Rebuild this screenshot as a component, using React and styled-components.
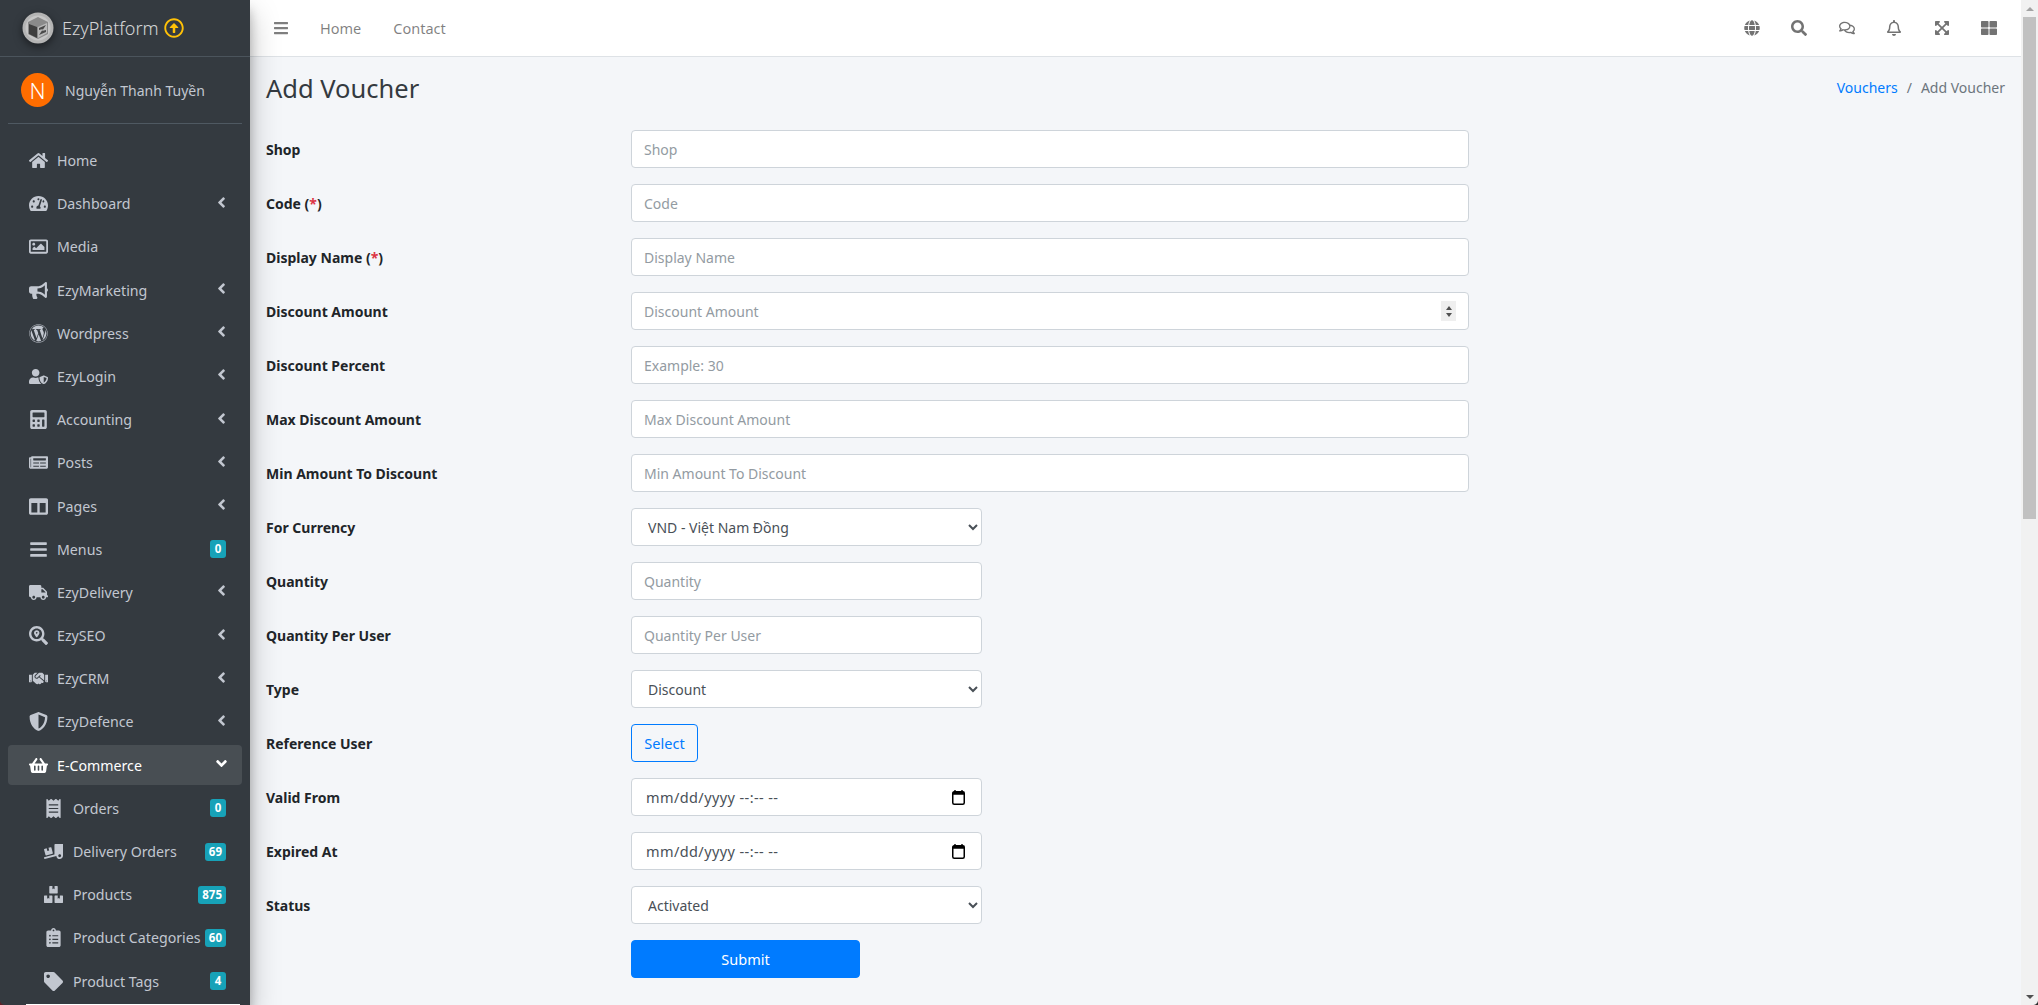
import React from 'react';
import styled, { createGlobalStyle } from 'styled-components';
import {
  FaHome, FaTachometerAlt, FaRegImage, FaBullhorn, FaWordpress, FaUserShield, FaCalculator,
  FaNewspaper, FaColumns, FaBars, FaTruck, FaSearchLocation, FaHandshake, FaShieldAlt,
  FaShoppingBasket, FaReceipt, FaTruckLoading, FaBoxes, FaClipboardList, FaTag, FaGlobe, FaSearch,
  FaRegComments, FaRegBell, FaExpandArrowsAlt, FaThLarge, FaAngleLeft, FaAngleDown, FaRegArrowAltCircleUp,
} from 'react-icons/fa';

const FONT = `"Noto Sans", Roboto, sans-serif`;

const GlobalStyle = createGlobalStyle`
  html, body { margin: 0; height: 100%; overflow: hidden; }
  body { font-family: ${FONT}; font-size: 14.5px; color: #212529; background: #f4f6f9; }
  * { box-sizing: border-box; }
`;

const Page = styled.div`
  display: flex;
  height: 1005px;
  overflow: hidden;
  position: relative;
`;
const Sidebar = styled.aside`
  width: 250px;
  flex: none;
  background: #343a40;
  box-shadow: 0 14px 28px rgba(0,0,0,.25), 0 10px 10px rgba(0,0,0,.22);
  position: relative;
  z-index: 2;
  overflow: hidden;
`;
const Brand = styled.div`
  height: 57px;
  display: flex;
  align-items: center;
  padding-left: 22px;
  border-bottom: 1px solid #4b545c;
  color: rgba(255,255,255,.8);
  font-size: 18px;
  font-weight: 300;
`;
const LogoMark = styled.svg`
  filter: drop-shadow(0 3px 4px rgba(0,0,0,.5));
  flex: none;
`;
const BrandName = styled.span`
  margin-left: 8px;
`;
const Upgrade = styled(FaRegArrowAltCircleUp)`
  color: #ffc107;
  font-size: 20px;
  margin-left: 5px;
`;
const UserPanel = styled.div`
  height: 67px;
  margin: 0 8px;
  display: flex;
  align-items: center;
  padding-left: 13px;
  border-bottom: 1px solid #4f5962;
  color: #c2c7d0;
`;
const Avatar = styled.div`
  width: 33px;
  height: 34px;
  border-radius: 50%;
  background: #ff6d00;
  color: #fff;
  font-size: 22px;
  font-weight: 300;
  display: flex;
  align-items: center;
  justify-content: center;
`;
const UserName = styled.span`
  margin-left: 11px;
  font-size: 14px;
`;
const Nav = styled.nav`
  margin: 16.5px 8px 0;
  display: flex;
  flex-direction: column;
  gap: 3.2px;
`;
const NavItem = styled.a`
  height: 40px;
  flex: none;
  display: flex;
  align-items: center;
  border-radius: 4px;
  color: ${p => (p.$active ? '#fff' : '#c2c7d0')};
  background: ${p => (p.$active ? 'rgba(255,255,255,.1)' : 'transparent')};
  padding: 0 16px 0 ${p => (p.$sub ? '31px' : '15px')};
`;
const NavIcon = styled.span`
  width: ${p => (p.$sub ? '28px' : '30px')};
  flex: none;
  display: flex;
  justify-content: center;
  align-items: center;
  font-size: 19px;
  margin-right: ${p => (p.$sub ? '6px' : '4px')};
`;
const NavText = styled.span`
  flex: 1;
  min-width: 0;
  font-size: 14.2px;
  white-space: nowrap;
`;
const Chevron = styled.span`
  font-size: 17px;
  display: flex;
  align-items: center;
  margin: -3px -4px 0 0;
`;
const Badge = styled.span`
  background: #17a2b8;
  color: #fff;
  font-size: 11.5px;
  font-weight: 700;
  line-height: 18px;
  min-width: 16px;
  padding: 0 4px;
  text-align: center;
  border-radius: 3px;
  flex: none;
`;
const NextItem = styled.div`
  height: 40px;
  flex: none;
  margin: 0 2px 0 18px;
  background: #fff;
`;
const Main = styled.div`
  flex: 1;
  min-width: 0;
  display: flex;
  flex-direction: column;
`;
const Navbar = styled.header`
  height: 57px;
  flex: none;
  background: #fff;
  border-bottom: 1px solid #dee2e6;
  display: flex;
  align-items: center;
  padding-left: 23px;
  color: rgba(0,0,0,.5);
`;
const BarsIcon = styled(FaBars)`
  font-size: 16px;
  margin-right: 31px;
`;
const TopLink = styled.a`
  font-size: 14.5px;
  margin-right: 32px;
`;
const TopIcons = styled.div`
  margin-left: auto;
  display: flex;
  align-items: center;
  gap: 31.5px;
  padding-right: 24px;
  font-size: 16px;
  color: rgba(0,0,0,.55);
`;
const Content = styled.main`
  padding: 0 16px;
`;
const Header = styled.div`
  display: flex;
  align-items: center;
  justify-content: space-between;
  height: 73px;
  padding-bottom: 11px;
`;
const Title = styled.h1`
  margin: 0;
  font-size: 25.5px;
  font-weight: 400;
  color: #343a40;
`;
const Breadcrumb = styled.div`
  display: flex;
  gap: 9px;
  font-size: 14px;
  color: #6c757d;
  margin-bottom: 2px;
`;
const Crumb = styled.a`
  color: #007bff;
`;
const Form = styled.form`
  display: flex;
  flex-direction: column;
  gap: 16px;
`;
const Row = styled.div`
  display: grid;
  grid-template-columns: 365px 838px;
  align-items: center;
  height: 38px;
`;
const Label = styled.label`
  font-weight: 700;
  font-size: 14px;
`;
const Star = styled.span`
  color: #dc3545;
`;
const fieldCss = `
  height: 38px;
  border: 1px solid #ced4da;
  border-radius: 4px;
  background: #fff;
  color: #495057;
  font-family: ${FONT};
  font-size: 14px;
  padding: 6px 12px;
  outline: none;
`;
const Input = styled.input`
  ${fieldCss}
  width: ${p => (p.$narrow ? '351px' : '100%')};
  &::placeholder { color: #939ba2; opacity: 1; }
  &::-webkit-inner-spin-button { display: none; }
`;
const NumberField = styled.div`
  position: relative;
`;
const Spinner = styled.div`
  position: absolute;
  top: 9px;
  right: 13px;
  width: 15px;
  height: 20px;
  background: #efefef;
  display: flex;
  flex-direction: column;
  align-items: center;
  justify-content: center;
  gap: 3px;
`;
const SpinArrow = styled.span`
  border-left: 3.5px solid transparent;
  border-right: 3.5px solid transparent;
  border-${p => (p.$down ? 'top' : 'bottom')}: 4px solid #505050;
`;
const DateField = styled.div`
  ${fieldCss}
  width: 351px;
  padding: 0 16px 0 14px;
  font-size: 14.5px;
  letter-spacing: 0.4px;
  display: flex;
  align-items: center;
  justify-content: space-between;
`;
const Select = styled.select`
  ${fieldCss}
  width: 351px;
`;
const OutlineButton = styled.button`
  height: 38px;
  width: 67px;
  border: 1px solid #007bff;
  border-radius: 4px;
  background: transparent;
  color: #007bff;
  font-family: ${FONT};
  font-size: 14.5px;
`;
const SubmitButton = styled.button`
  height: 38px;
  width: 229px;
  border: 1px solid #007bff;
  border-radius: 4px;
  background: #007bff;
  color: #fff;
  font-family: ${FONT};
  font-size: 14.5px;
  grid-column: 2;
`;
const Scrollbar = styled.div`
  width: 17px;
  flex: none;
  background: #f1f1f1;
  display: flex;
  flex-direction: column;
  align-items: center;
`;
const Arrow = styled.div`
  height: 17px;
  flex: none;
  display: flex;
  align-items: center;
  justify-content: center;
  &::before {
    content: '';
    border-left: 4px solid transparent;
    border-right: 4px solid transparent;
    border-${p => (p.$down ? 'top' : 'bottom')}: 4px solid ${p => (p.$down ? '#505050' : '#a3a3a3')};
  }
`;
const Thumb = styled.div`
  width: 13px;
  height: 502px;
  flex: none;
  background: #c1c1c1;
`;
const Track = styled.div`
  flex: 1;
`;
const Corner = styled.div`
  position: absolute;
  bottom: 0;
  ${p => (p.$right ? 'right: 0' : 'left: 0')};
  width: 5px;
  height: 5px;
  z-index: 3;
  background: radial-gradient(circle at ${p => (p.$right ? '0 0' : '100% 0')}, transparent 4.5px, ${p => (p.$right ? '#2b2b2b' : '#5c2026')} 5.5px);
`;

const Logo = () => (
  <LogoMark width="32" height="32" viewBox="0 0 32 32">
    <circle cx="16" cy="16" r="15.5" fill="#b4b4b4" />
    <circle cx="16" cy="16" r="12.5" fill="#c6c6c6" />
    <path d="M16 5 L26 10 V22 L16 27 L6 22 V10 Z" fill="#8a8a8a" />
    <path d="M7 12 L15 15 V26 L7 22 Z" fill="#3f3f3f" />
    <path d="M16 15 L25 11 V21 L16 26 Z" fill="#b9b9b9" />
    <path d="M17 16 L24 13 L20 19 L24 18 L24 20 L17 23 L21 17 L17 18 Z" fill="#4a4a4a" />
  </LogoMark>
);

const CalendarIcon = () => (
  <svg width="13" height="15" viewBox="0 0 13 15">
    <path d="M3 0v2M10 0v2" stroke="#000" strokeWidth="1.4" />
    <rect x="0.75" y="1.75" width="11.5" height="12.5" rx="1.5" fill="#fff" stroke="#000" strokeWidth="1.5" />
    <rect x="0.75" y="1.75" width="11.5" height="3" fill="#000" />
  </svg>
);

const menu = [
  { icon: FaHome, text: 'Home' },
  { icon: FaTachometerAlt, text: 'Dashboard', more: true },
  { icon: FaRegImage, text: 'Media' },
  { icon: FaBullhorn, text: 'EzyMarketing', more: true },
  { icon: FaWordpress, text: 'Wordpress', more: true },
  { icon: FaUserShield, text: 'EzyLogin', more: true },
  { icon: FaCalculator, text: 'Accounting', more: true },
  { icon: FaNewspaper, text: 'Posts', more: true },
  { icon: FaColumns, text: 'Pages', more: true },
  { icon: FaBars, text: 'Menus', badge: 0 },
  { icon: FaTruck, text: 'EzyDelivery', more: true },
  { icon: FaSearchLocation, text: 'EzySEO', more: true },
  { icon: FaHandshake, text: 'EzyCRM', more: true },
  { icon: FaShieldAlt, text: 'EzyDefence', more: true },
  { icon: FaShoppingBasket, text: 'E-Commerce', active: true },
  { icon: FaReceipt, text: 'Orders', badge: 0, sub: true },
  { icon: FaTruckLoading, text: 'Delivery Orders', badge: 69, sub: true },
  { icon: FaBoxes, text: 'Products', badge: 875, sub: true },
  { icon: FaClipboardList, text: 'Product Categories', badge: 60, sub: true },
  { icon: FaTag, text: 'Product Tags', badge: 4, sub: true },
];

function App() {
  return (
    <Page>
      <GlobalStyle />
      <Sidebar>
        <Brand>
          <Logo />
          <BrandName>EzyPlatform</BrandName>
          <Upgrade />
        </Brand>
        <UserPanel>
          <Avatar>N</Avatar>
          <UserName>Nguyễn Thanh Tuyền</UserName>
        </UserPanel>
        <Nav>
          {menu.map(item => {
            const Icon = item.icon;
            return (
              <NavItem key={item.text} $active={item.active} $sub={item.sub}>
                <NavIcon $sub={item.sub}><Icon /></NavIcon>
                <NavText>{item.text}</NavText>
                {item.more && <Chevron><FaAngleLeft /></Chevron>}
                {item.active && <Chevron><FaAngleDown /></Chevron>}
                {item.badge !== undefined && <Badge>{item.badge}</Badge>}
              </NavItem>
            );
          })}
          <NextItem />
        </Nav>
      </Sidebar>
      <Main>
        <Navbar>
          <BarsIcon />
          <TopLink>Home</TopLink>
          <TopLink>Contact</TopLink>
          <TopIcons>
            <FaGlobe />
            <FaSearch />
            <FaRegComments />
            <FaRegBell />
            <FaExpandArrowsAlt />
            <FaThLarge />
          </TopIcons>
        </Navbar>
        <Content>
          <Header>
            <Title>Add Voucher</Title>
            <Breadcrumb>
              <Crumb>Vouchers</Crumb>
              <span>/</span>
              <span>Add Voucher</span>
            </Breadcrumb>
          </Header>
          <Form>
            <Row><Label>Shop</Label><Input placeholder="Shop" /></Row>
            <Row><Label>Code (<Star>*</Star>)</Label><Input placeholder="Code" /></Row>
            <Row><Label>Display Name (<Star>*</Star>)</Label><Input placeholder="Display Name" /></Row>
            <Row>
              <Label>Discount Amount</Label>
              <NumberField>
                <Input type="number" placeholder="Discount Amount" />
                <Spinner><SpinArrow /><SpinArrow $down /></Spinner>
              </NumberField>
            </Row>
            <Row><Label>Discount Percent</Label><Input placeholder="Example: 30" /></Row>
            <Row><Label>Max Discount Amount</Label><Input placeholder="Max Discount Amount" /></Row>
            <Row><Label>Min Amount To Discount</Label><Input placeholder="Min Amount To Discount" /></Row>
            <Row><Label>For Currency</Label><Select><option>VND - Việt Nam Đồng</option></Select></Row>
            <Row><Label>Quantity</Label><Input $narrow placeholder="Quantity" /></Row>
            <Row><Label>Quantity Per User</Label><Input $narrow placeholder="Quantity Per User" /></Row>
            <Row><Label>Type</Label><Select><option>Discount</option></Select></Row>
            <Row><Label>Reference User</Label><div><OutlineButton type="button">Select</OutlineButton></div></Row>
            <Row><Label>Valid From</Label><DateField>mm/dd/yyyy --:-- --<CalendarIcon /></DateField></Row>
            <Row><Label>Expired At</Label><DateField>mm/dd/yyyy --:-- --<CalendarIcon /></DateField></Row>
            <Row><Label>Status</Label><Select><option>Activated</option></Select></Row>
            <Row><SubmitButton type="button">Submit</SubmitButton></Row>
          </Form>
        </Content>
      </Main>
      <Scrollbar>
        <Arrow />
        <Thumb />
        <Track />
        <Arrow $down />
      </Scrollbar>
      <Corner />
      <Corner $right />
    </Page>
  );
}

export default App;
